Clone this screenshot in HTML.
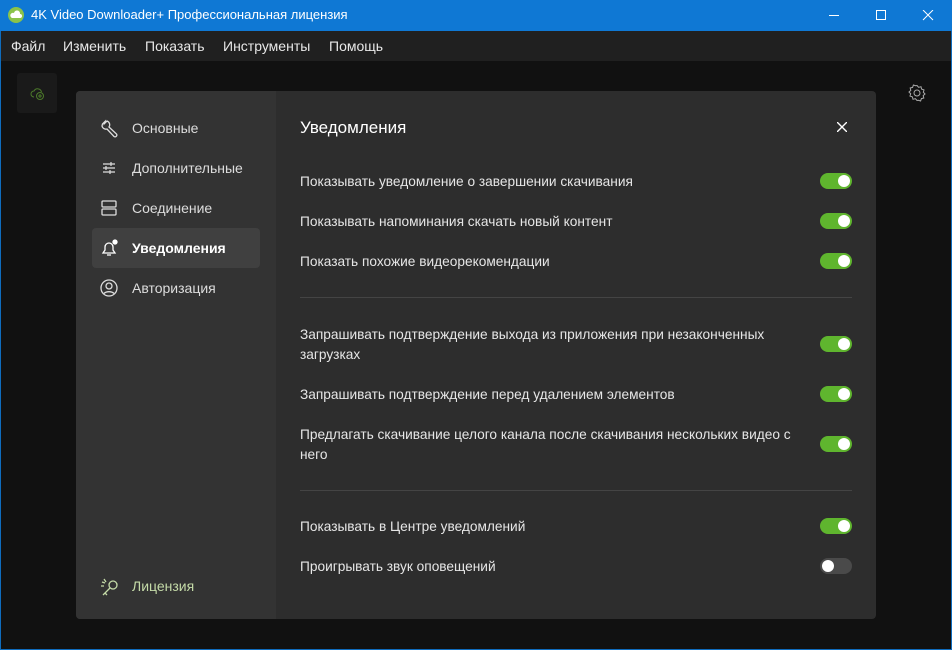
<!DOCTYPE html>
<html><head><meta charset="utf-8"><style>
*{margin:0;padding:0;box-sizing:border-box}
body{width:952px;height:650px;background:#0f6cbd;font-family:"Segoe UI","Liberation Sans",sans-serif;overflow:hidden;position:relative}
.title{position:absolute;left:0;top:0;width:952px;height:31px;background:#0f78d4;color:#fff;font-size:13px}
.title span{position:absolute;left:31px;top:7px}
.menu{position:absolute;left:1px;top:31px;width:950px;height:30px;background:#202020;color:#e8e8e8;font-size:14px}
.menu span{position:absolute;top:7px}
.main{position:absolute;left:1px;top:61px;width:950px;height:588px;background:#111}
.dlg{position:absolute;left:76px;top:91px;width:800px;height:528px;background:#2d2d2d;border-radius:4px;overflow:hidden}
.side{position:absolute;left:0;top:0;width:200px;height:528px;background:#333}
.nav{position:absolute;left:16px;width:168px;height:40px;color:#ddd;font-size:14px;border-radius:4px}
.nav span{position:absolute;left:40px;top:12px}
.nav svg{position:absolute;left:8px;top:11px}
.sel{background:#404040;color:#fff;font-weight:bold}
.h{position:absolute;left:224px;top:27px;color:#fff;font-size:17px}
.row{position:absolute;left:224px;width:500px;color:#e6e6e6;font-size:13.7px;line-height:20px}
.tg{position:absolute;left:744px;width:32px;height:16px;border-radius:8px;background:#5fb52e}
.tg::after{content:"";position:absolute;right:2px;top:2px;width:12px;height:12px;border-radius:50%;background:#fff}
.off{background:#4a4a4a}.off::after{left:2px;right:auto}
.sep{position:absolute;left:224px;width:552px;height:1px;background:#444}
</style></head><body>
<div class="title">
<svg style="position:absolute;left:8px;top:7px" width="16" height="16"><circle cx="8" cy="8" r="8" fill="#8bc34a"/><path d="M4 11h8a2 2 0 0 0 0-4 3 3 0 0 0-6-1 2.5 2.5 0 0 0-2 5z" fill="#fff"/></svg>
<span>4K Video Downloader+ Профессиональная лицензия</span>
<svg style="position:absolute;left:829px;top:10px" width="110" height="12" stroke="#fff" fill="none" stroke-width="1"><path d="M0 5.5h10"/><rect x="47.5" y="0.5" width="9" height="9"/><path d="M94 0l10 10M104 0l-10 10"/></svg>
</div>
<div class="menu"><span style="left:10px">Файл</span><span style="left:62px">Изменить</span><span style="left:144px">Показать</span><span style="left:222px">Инструменты</span><span style="left:328px">Помощь</span></div>
<div class="main">
<div style="position:absolute;left:16px;top:12px;width:40px;height:40px;background:#1a1a1a;border-radius:3px"><svg style="position:absolute;left:12px;top:12px" width="16" height="16" stroke="#4c7a2a" fill="none"><path d="M5 12a3 3 0 0 1 0-6 4 4 0 0 1 7.5 1"/><circle cx="11" cy="11" r="3.5"/><path d="M11 9v4M9 11h4"/></svg></div>
<svg style="position:absolute;left:907px;top:23px" width="18" height="18" stroke="#aaa" fill="none"><circle cx="9" cy="9" r="3"/><path d="M9 1.5l1.6 1.8 2.4-.6.6 2.4 2.4.8-.7 2.3 1.7 1.8-1.8 1.6.6 2.4-2.4.6-.8 2.4-2.3-.7L9 16.5l-1.6-1.8-2.4.6-.6-2.4-2.4-.8.7-2.3L1 8l1.8-1.6L2.2 4l2.4-.6.8-2.4 2.3.7z"/></svg>
</div>
<div class="dlg">
<div class="side">
<div class="nav" style="top:17px"><svg width="20" height="20" stroke="#ddd" fill="none" stroke-width="1.3"><path d="M7 2L4.5 4.5 5 2.5 2.5 5 2 7a4 4 0 0 0 5 3l7 7.5a1.8 1.8 0 0 0 2.5-2.5L9 8a4 4 0 0 0-2-6z"/></svg><span>Основные</span></div>
<div class="nav" style="top:57px"><svg width="18" height="18" stroke="#ddd" stroke-width="1.2"><path d="M3 5h12M3 9h12M3 13h12M11 3v4M6 7v4M10 11v4"/></svg><span>Дополнительные</span></div>
<div class="nav" style="top:97px"><svg width="18" height="18" stroke="#ddd" fill="none" stroke-width="1.3"><rect x="2" y="2" width="14" height="6" rx="1"/><rect x="2" y="10" width="14" height="6" rx="1"/></svg><span>Соединение</span></div>
<div class="nav sel" style="top:137px"><svg width="18" height="18" stroke="#fff" fill="none" stroke-width="1.3"><path d="M3 14h12l-2-3V8a4 4 0 0 0-8 0v3zM7 16h4"/><circle cx="15" cy="3" r="2" fill="#fff"/></svg><span>Уведомления</span></div>
<div class="nav" style="top:177px"><svg width="18" height="18" stroke="#ddd" fill="none" stroke-width="1.3"><circle cx="9" cy="9" r="8"/><circle cx="9" cy="7" r="3"/><path d="M4 14.5a6 4 0 0 1 10 0"/></svg><span>Авторизация</span></div>
<div class="nav" style="top:475px;color:#c5dba8"><svg width="20" height="20" stroke="#c5dba8" fill="none" stroke-width="1.3"><circle cx="13" cy="8" r="4"/><path d="M10 11l-7 7M5 16l2 2M2 5l3 1M4 2l2 3M1 9h3"/></svg><span>Лицензия</span></div>
</div>
<div class="h">Уведомления</div>
<svg style="position:absolute;left:761px;top:31px" width="10" height="10" stroke="#fff" stroke-width="1.4"><path d="M0 0l10 10M10 0L0 10"/></svg>
<div class="row" style="top:81px">Показывать уведомление о завершении скачивания</div><div class="tg" style="top:82px"></div>
<div class="row" style="top:121px">Показывать напоминания скачать новый контент</div><div class="tg" style="top:122px"></div>
<div class="row" style="top:161px">Показать похожие видеорекомендации</div><div class="tg" style="top:162px"></div>
<div class="sep" style="top:206px"></div>
<div class="row" style="top:234px">Запрашивать подтверждение выхода из приложения при незаконченных загрузках</div><div class="tg" style="top:245px"></div>
<div class="row" style="top:294px">Запрашивать подтверждение перед удалением элементов</div><div class="tg" style="top:295px"></div>
<div class="row" style="top:334px">Предлагать скачивание целого канала после скачивания нескольких видео с него</div><div class="tg" style="top:345px"></div>
<div class="sep" style="top:399px"></div>
<div class="row" style="top:426px">Показывать в Центре уведомлений</div><div class="tg" style="top:427px"></div>
<div class="row" style="top:466px">Проигрывать звук оповещений</div><div class="tg off" style="top:467px"></div>
</div>
</body></html>
